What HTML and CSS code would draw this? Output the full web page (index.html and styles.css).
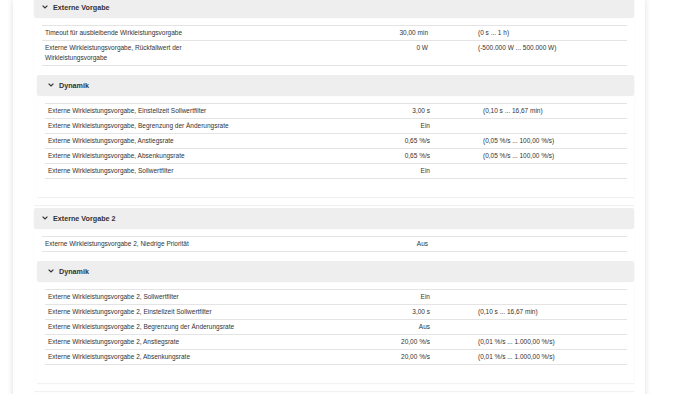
FILE: index.html
```html
<!DOCTYPE html>
<html lang="de">
<head>
  <meta charset="UTF-8" />
  <title>Parameter</title>
  <link rel="stylesheet" href="styles.css">
</head>
<body>
  <div class="page">

    <div class="section first">
      <div class="section-head">
        <svg class="chevron" viewBox="0 0 6 4"><path d="M0.6 0.6 L3 3 L5.4 0.6" /></svg>
        <span>Externe Vorgabe</span>
      </div>
      <div class="params wide-label">
        <div class="row"><div class="label">Timeout für ausbleibende Wirkleistungsvorgabe</div><div class="value">30,00 min</div><div class="range">(0 s ... 1 h)</div></div>
        <div class="row"><div class="label">Externe Wirkleistungsvorgabe, Rückfallwert der Wirkleistungsvorgabe</div><div class="value">0 W</div><div class="range">(-500.000 W ... 500.000 W)</div></div>
      </div>

      <div class="sub">
        <div class="section-head sub-head">
          <svg class="chevron" viewBox="0 0 6 4"><path d="M0.6 0.6 L3 3 L5.4 0.6" /></svg>
          <span>Dynamik</span>
        </div>
        <div class="params dyn-1">
          <div class="row"><div class="label">Externe Wirkleistungsvorgabe, Einstellzeit Sollwertfilter</div><div class="value">3,00 s</div><div class="range">(0,10 s ... 16,67 min)</div></div>
          <div class="row"><div class="label">Externe Wirkleistungsvorgabe, Begrenzung der Änderungsrate</div><div class="value">Ein</div><div class="range"></div></div>
          <div class="row"><div class="label">Externe Wirkleistungsvorgabe, Anstiegsrate</div><div class="value">0,65 %/s</div><div class="range">(0,05 %/s ... 100,00 %/s)</div></div>
          <div class="row"><div class="label">Externe Wirkleistungsvorgabe, Absenkungsrate</div><div class="value">0,65 %/s</div><div class="range">(0,05 %/s ... 100,00 %/s)</div></div>
          <div class="row"><div class="label">Externe Wirkleistungsvorgabe, Sollwertfilter</div><div class="value">Ein</div><div class="range"></div></div>
        </div>
      </div>
    </div>

    <div class="section">
      <div class="section-head">
        <svg class="chevron" viewBox="0 0 6 4"><path d="M0.6 0.6 L3 3 L5.4 0.6" /></svg>
        <span>Externe Vorgabe 2</span>
      </div>
      <div class="params plain">
        <div class="row"><div class="label">Externe Wirkleistungsvorgabe 2, Niedrige Priorität</div><div class="value">Aus</div><div class="range"></div></div>
      </div>

      <div class="sub">
        <div class="section-head sub-head">
          <svg class="chevron" viewBox="0 0 6 4"><path d="M0.6 0.6 L3 3 L5.4 0.6" /></svg>
          <span>Dynamik</span>
        </div>
        <div class="params dyn-2">
          <div class="row"><div class="label">Externe Wirkleistungsvorgabe 2, Sollwertfilter</div><div class="value">Ein</div><div class="range"></div></div>
          <div class="row"><div class="label">Externe Wirkleistungsvorgabe 2, Einstellzeit Sollwertfilter</div><div class="value">3,00 s</div><div class="range">(0,10 s ... 16,67 min)</div></div>
          <div class="row"><div class="label">Externe Wirkleistungsvorgabe 2, Begrenzung der Änderungsrate</div><div class="value">Aus</div><div class="range"></div></div>
          <div class="row"><div class="label">Externe Wirkleistungsvorgabe 2, Anstiegsrate</div><div class="value">20,00 %/s</div><div class="range">(0,01 %/s ... 1.000,00 %/s)</div></div>
          <div class="row"><div class="label">Externe Wirkleistungsvorgabe 2, Absenkungsrate</div><div class="value">20,00 %/s</div><div class="range">(0,01 %/s ... 1.000,00 %/s)</div></div>
        </div>
      </div>
    </div>

    <div class="section">
      <div class="section-head"></div>
    </div>

  </div>
</body>
</html>
```

FILE: styles.css
```css
body {
  margin: 0;
  background-color: #ffffff;
  font-family: "Liberation Sans", Arial, sans-serif;
  color: #333;
  overflow: hidden;
}

.page {
  width: 632px;
  min-height: 100vh;
  margin-left: 13px;
  background-color: #fff;
  box-shadow: 0 0 6px rgba(0, 0, 0, 0.14);
  padding-top: 1px;
}

.section {
  margin: 3px 11px 0 21px;
  padding-bottom: 8px;
  background-color: #fff;
  box-shadow: 0 1px 1px rgba(0, 0, 0, 0.05);
}

.section.first {
  margin-top: -4px;
}

.section-head {
  height: 20px;
  display: flex;
  align-items: center;
  padding-left: 8px;
  background-color: #eeeeee;
  border-radius: 2px;
  box-shadow: 0 1px 1px rgba(0, 0, 0, 0.08);
  font-size: 7.2px;
  font-weight: bold;
  color: #333;
}

.chevron {
  width: 6px;
  height: 4px;
  margin-right: 5px;
}

.chevron path {
  fill: none;
  stroke: #333;
  stroke-width: 1.2;
}

.sub-head {
  padding-left: 11px;
}

.sub {
  margin: 9px 0 0 3px;
  padding-bottom: 18px;
  background-color: #fff;
  box-shadow: 0 1px 1px rgba(0, 0, 0, 0.05);
}

.params {
  margin: 8px 7px 0 8px;
  border-top: 1px solid #e4e4e4;
  font-size: 6.5px;
  line-height: 10px;
}

.row {
  display: grid;
  grid-template-columns: 250px 138px 1fr;
  border-bottom: 1px solid #e4e4e4;
}

.row div {
  padding: 2px 3px;
}

.value {
  text-align: right;
}

.wide-label .row {
  grid-template-columns: 158px 231px 1fr;
}

.wide-label .range {
  padding-left: 47px;
}

.plain .row {
  grid-template-columns: 250px 139px 1fr;
}

.dyn-1 .range {
  padding-left: 50px;
}

.dyn-2 .range {
  padding-left: 45px;
}
```
